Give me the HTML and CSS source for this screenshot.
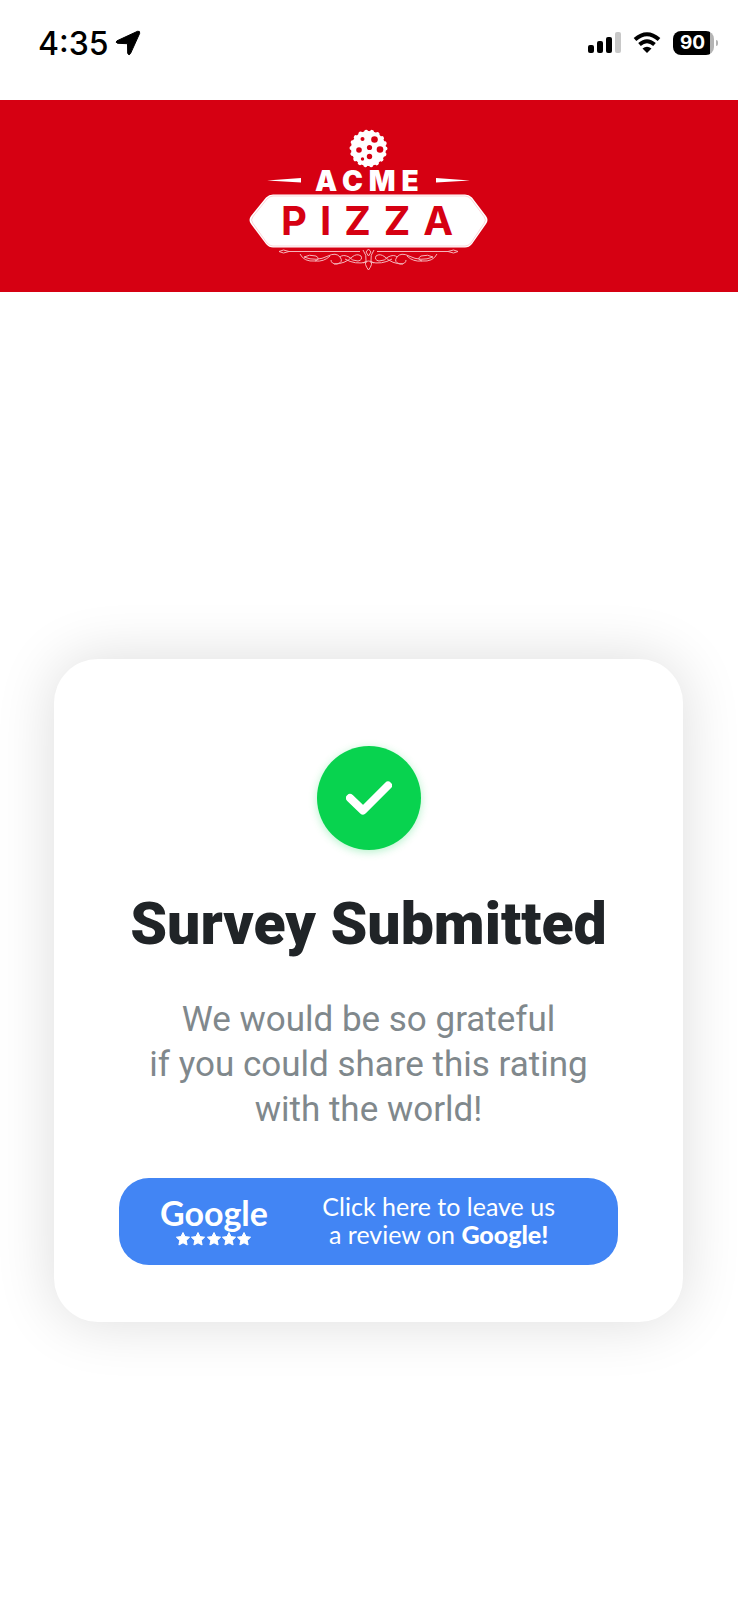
FILE: index.html
```html
<!DOCTYPE html>
<html lang="en">
<head>
    <meta charset="UTF-8">
    <meta name="viewport" content="width=device-width, initial-scale=1.0">
    <title>Acme Pizza - Survey Submitted</title>
    <link rel="stylesheet" href="styles.css">
</head>
<body>
    <!-- Status bar -->
    <div class="status-bar">
        <div class="status-left">
            <span class="time">4:35</span>
            <svg class="location" width="26" height="26" viewBox="0 0 26 26" aria-hidden="true">
                <path d="M2 10.800 L22.500 1.300 Q25.200 .600 24.700 3.300 L15.500 23.600 Q14 26 12.700 23.500 L12.500 13.700 L2.500 13.300 Q0 12.300 2 10.800 Z" stroke="#000" stroke-linejoin="round"/>
            </svg>
        </div>
        <div class="status-right">
            <svg width="33" height="22" viewBox="0 0 33 22" aria-hidden="true">
                <rect x="0" y="13" width="6" height="8" rx="2"/>
                <rect x="9" y="9" width="6" height="12" rx="2"/>
                <rect x="18" y="5" width="6" height="16" rx="2"/>
                <rect x="27" y="0" width="6" height="21" rx="2" fill="#c8c8c8"/>
            </svg>
            <svg width="28" height="22" viewBox="0 0 28 22" aria-hidden="true">
                <path d="M2 7.500 Q14 -3 26 7.500 M6.500 12.500 Q14 6 21.500 12.500" fill="none" stroke="#000" stroke-width="4"/>
                <path d="M9.500 16.500 Q14 12.800 18.500 16.500 L14 21 Z"/>
            </svg>
            <div class="battery">90</div>
        </div>
    </div>

    <!-- Brand header -->
    <header class="header">
        <svg class="logo" width="258" height="160" viewBox="0 0 258 160" role="img" aria-label="Acme Pizza">
            <!-- pizza -->
            <circle cx="128.500" cy="28.500" r="17.500" fill="#fff"/>
            <circle cx="128.500" cy="28.500" r="17" fill="none" stroke="#fff" stroke-width="4" stroke-linecap="round" stroke-dasharray="0.100 5.835"/>
            <g class="logo-red">
                <circle cx="122.500" cy="19" r="2"/>
                <circle cx="134.500" cy="19.500" r="3.300"/>
                <circle cx="119" cy="30" r="2.800"/>
                <circle cx="129.500" cy="27.500" r="2.600"/>
                <circle cx="140" cy="29.500" r="3.300"/>
                <circle cx="129.500" cy="36.500" r="2.700"/>
                <circle cx="122.500" cy="39" r="1.700"/>
            </g>
            <!-- side darts -->
            <path d="M27 60.500 L61 58 V62.500 Z M230 60.500 L196 58 V62.500 Z" fill="#fff"/>
            <text class="logo-acme" x="75" y="71">ACME</text>
            <!-- ribbon -->
            <path d="M33 74.500 H225 Q229 74.500 232 77.500 L246 96 Q249 100 246 104 L232 124 Q229 127.500 225 127.500 H33 Q29 127.500 26 124 L11 104 Q8 100 11 96 L26 77.500 Q29 74.500 33 74.500 Z" fill="#fff"/>
            <path d="M33 76 H225 Q228 76 231 79 L244 96.500 Q247 100 244 103.500 L231 123 Q228 126 225 126 H33 Q30 126 27 123 L13 103.500 Q10 100 13 96.500 L27 79 Q30 76 33 76 Z" fill="none" stroke="#f3aab0" stroke-width="0.500"/>
            <text class="logo-pizza" x="41" y="115">PIZZA</text>
            <!-- flourish -->
            <g class="flourish">
                <path d="M49 131.500 H120 M39 131.500 Q43 128.500 49 131.500 Q43 134.500 39 131.500 Z"/>
                <path d="M60 134 Q64 142 75 141 Q81 139 76 136 Q69 134 64 137 M64 137 Q76 142 88 136 Q96 132 100 137 Q104 142 97 144 Q91 144 91 140 M75 141 Q84 142 90 136 M94 144 Q105 144 112 137 Q117 133 121 136 Q123 140 118 141 Q112 141 109 137 Q103 134 100 137 M105 139 Q115 145 127 142"/>
                <path d="M208 131.500 H137 M218 131.500 Q214 128.500 208 131.500 Q214 134.500 218 131.500 Z"/>
                <path d="M197 134 Q193 142 182 141 Q176 139 181 136 Q188 134 193 137 M193 137 Q181 142 169 136 Q161 132 157 137 Q153 142 160 144 Q166 144 166 140 M182 141 Q173 142 167 136 M163 144 Q152 144 145 137 Q140 133 136 136 Q134 140 139 141 Q145 141 148 137 Q154 134 157 137 M152 139 Q142 145 130 142"/>
                <path d="M128.500 129 L131 132 L128.500 136 L126 132 Z M123 130 Q127 135 126 141 Q124 144 128.500 150 Q133 144 131 141 Q130 135 134 130 M123 143 Q128.500 139 134 143"/>
            </g>
        </svg>
    </header>

    <!-- Confirmation card -->
    <main class="main">
        <section class="card">
            <div class="check">
                <svg width="46" height="34" viewBox="0 0 46 34" aria-hidden="true">
                    <path d="M4 17 L17 29.500 L42 4.500" fill="none" stroke="#fff" stroke-width="8" stroke-linecap="round" stroke-linejoin="round"/>
                </svg>
            </div>
            <h1>Survey Submitted</h1>
            <p>We would be so grateful<br>if you could share this rating<br>with the world!</p>
            <a class="review" href="#">
                <span class="google">
                    <span class="google-name">Google</span>
                    <svg width="76" height="14" viewBox="0 0 76 14" aria-hidden="true">
                        <defs>
                            <path id="star" d="M7 .5 L9 4.600 L13.600 5.200 L10.200 8.400 L11.100 13 L7 10.800 L2.900 13 L3.800 8.400 L.4 5.200 L5 4.600 Z" fill="#fff" stroke="#fff" stroke-linejoin="round"/>
                        </defs>
                        <use href="#star"/>
                        <use href="#star" x="15"/>
                        <use href="#star" x="31"/>
                        <use href="#star" x="46"/>
                        <use href="#star" x="61"/>
                    </svg>
                </span>
                <span class="review-text">Click here to leave us<br>a review on <b>Google!</b></span>
            </a>
        </section>
    </main>
</body>
</html>
```

FILE: styles.css
```css
* {
    box-sizing: border-box;
}

body {
    margin: 0;
    min-height: 100vh;
    display: flex;
    flex-direction: column;
    background-color: #ffffff;
    font-family: Roboto, "Liberation Sans", sans-serif;
}

/* Status bar */
.status-bar {
    display: flex;
    justify-content: space-between;
    align-items: center;
    height: 100px;
    padding: 0 20px 14px 38px;
}

.status-left,
.status-right {
    display: flex;
    align-items: center;
}

.status-left {
    gap: 6px;
}

.status-right {
    gap: 12px;
}

.time {
    font-family: Inter, sans-serif;
    font-size: 32px;
    font-weight: 500;
}

.battery {
    position: relative;
    width: 41px;
    height: 24px;
    margin-right: 4px;
    padding-right: 2px;
    border-radius: 8px;
    background: linear-gradient(to right, #000000 37px, #b4b4b4 37px);
    color: #ffffff;
    font-family: Inter, sans-serif;
    font-size: 19px;
    font-weight: 700;
    line-height: 24px;
    text-align: center;
}

.battery::after {
    content: "";
    position: absolute;
    top: 9px;
    right: -4px;
    width: 2px;
    height: 6px;
    border-radius: 0 2px 2px 0;
    background-color: #b4b4b4;
}

/* Brand header */
.header {
    display: flex;
    justify-content: center;
    padding: 20px 0 12px;
    background-color: #d60012;
}

.logo {
    display: block;
}

.logo-red {
    fill: #d60012;
}

.logo-acme {
    fill: #ffffff;
    font-family: Inter, sans-serif;
    font-size: 28px;
    font-weight: 900;
    letter-spacing: 6px;
}

.logo-pizza {
    fill: #d60012;
    font-family: Inter, sans-serif;
    font-size: 40px;
    font-weight: 700;
    letter-spacing: 13px;
}

.flourish {
    fill: none;
    stroke: #f6b5ba;
    stroke-width: 1px;
}

/* Confirmation card */
.main {
    flex: 1;
    display: flex;
    align-items: center;
    padding: 89px 55px 0 54px;
}

.card {
    flex: 1;
    display: flex;
    flex-direction: column;
    align-items: center;
    padding: 87px 65px 57px;
    border-radius: 44px;
    background-color: #ffffff;
    box-shadow: 0 0 60px rgba(0, 0, 0, 0.14);
    text-align: center;
}

.check {
    display: flex;
    justify-content: center;
    align-items: center;
    width: 104px;
    height: 104px;
    border-radius: 50%;
    background-color: #08d34f;
    box-shadow: 0 2px 8px rgba(8, 211, 79, 0.3);
}

h1 {
    margin: 42px 0 41px;
    color: #202427;
    font-size: 59px;
    font-weight: 900;
    line-height: 64px;
    white-space: nowrap;
}

p {
    margin: 0 0 46px;
    color: #80888c;
    font-size: 35px;
    line-height: 45px;
    white-space: nowrap;
}

/* Review button */
.review {
    align-self: stretch;
    display: flex;
    justify-content: space-between;
    align-items: center;
    height: 87px;
    padding: 0 63px 4px 41px;
    border-radius: 30px;
    background-color: #4285f4;
    color: #ffffff;
    font-family: Lato, sans-serif;
    text-decoration: none;
}

.google {
    display: flex;
    flex-direction: column;
    align-items: center;
}

.google-name {
    font-size: 34px;
    font-weight: 700;
    line-height: 38px;
}

.review-text {
    font-size: 25px;
    line-height: 28px;
}

.review-text b {
    font-weight: 900;
}
```
